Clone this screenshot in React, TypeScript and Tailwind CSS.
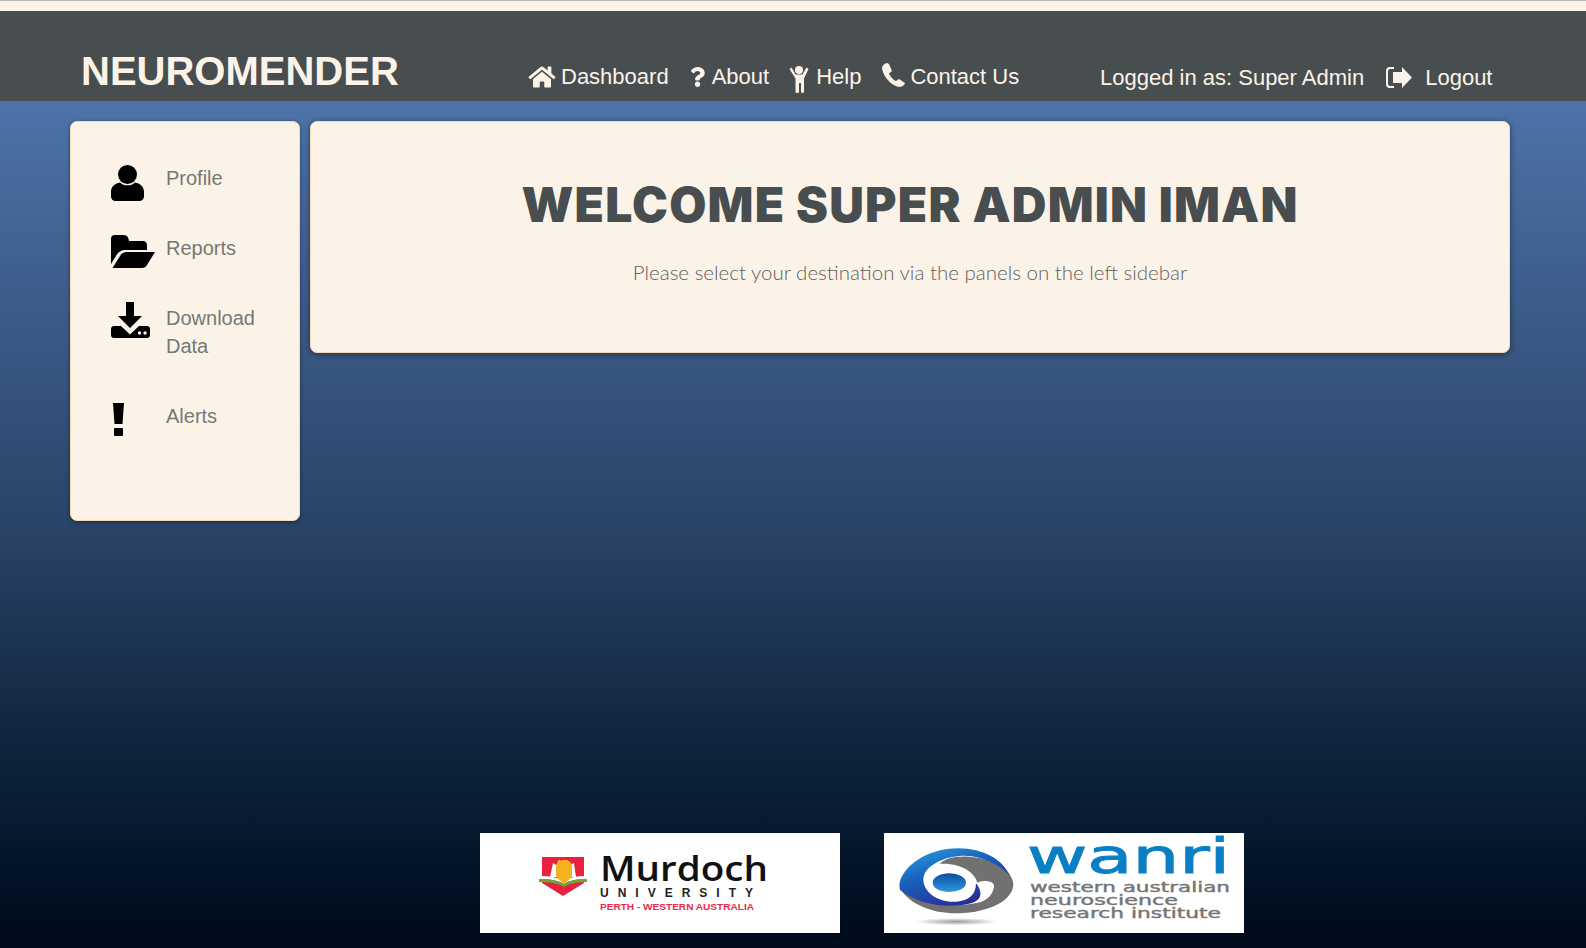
import { FaHome, FaQuestion } from "react-icons/fa";

function HelpIcon() {
  return (
    <svg viewBox="0 0 20 27" className="w-[20px] h-[27px] fill-[#fcf3e8] mt-[5px]">
      <circle cx="10" cy="4" r="4" />
      <path d="M.5 3 2.500 1.500 6.500 8.500h7l4-7L19.500 3 15 12.500V25.500a1.500 1.500 0 0 1-3 0V17h-2v8.500a1.500 1.500 0 0 1-3.500 0V12.500z" />
    </svg>
  );
}

function ContactIcon() {
  return (
    <svg viewBox="0 0 24 24" className="w-[24px] h-[24px] fill-[#fcf3e8] -mt-[3px]">
      <path d="M1 5C1 3 4 0 6 0L8 1l3 7-3 2.500c1 2.500 4 6.500 7 7.500l3-2 6 4-1 2c-2 2-5 2-7 1.500C9 21 2 13 1 5z" />
    </svg>
  );
}

function LogoutIcon() {
  return (
    <svg viewBox="0 0 26 21" className="w-[26px] h-[21px] fill-[#fcf3e8]">
      <path d="M8 0H4a4 4 0 0 0-4 4v13a4 4 0 0 0 4 4h4v-2H4.500A2.500 2.500 0 0 1 2 16.500v-12A2.500 2.500 0 0 1 4.500 2H8z" />
      <path d="M7 5h9V0l10 10.500L16 21v-5H7z" />
    </svg>
  );
}

function UserIcon() {
  return (
    <svg viewBox="0 0 33 36" className="w-[33px] h-[36px]">
      <circle cx="16.500" cy="9.500" r="9.500" />
      <path d="M9 17.500c2 2 4.500 2.800 7.500 2.800s5.500-.8 7.500-2.800c5 .8 9 4 9 9.500v4.500c0 2.500-2 4.500-4.500 4.500h-24C2 36 0 34 0 31.500V27c0-5.500 4-8.700 9-9.500z" />
    </svg>
  );
}

function FolderIcon() {
  return (
    <svg viewBox="0 0 44 33" className="w-[44px] h-[33px]">
      <path d="M0 4a4 4 0 0 1 4-4h9c3 0 4.500 2 5 6h14c2.500 0 4 1.800 4 4v5H15c-5 0-7.500 2-9.500 5L0 29z" />
      <path d="M1.500 33 9 21c2-3 3.500-4 7-4h28l-8 13c-1.200 2-2.500 3-5 3z" />
    </svg>
  );
}

function DownloadIcon() {
  return (
    <svg viewBox="0 0 39 36" className="w-[39px] h-[36px]">
      <path d="M15 0h8v14h8L19 26 7 14h8z" />
      <path d="M3 24h7l9 8.500 9-8.500h8c1.700 0 3 1.300 3 3v6c0 1.700-1.300 3-3 3H3c-1.700 0-3-1.300-3-3v-6c0-1.700 1.300-3 3-3z" />
      <circle cx="28.500" cy="31" r="1.700" fill="#fcf3e8" />
      <circle cx="34" cy="31" r="1.700" fill="#fcf3e8" />
    </svg>
  );
}

function AlertIcon() {
  return (
    <svg viewBox="0 0 11 33" className="w-[11px] h-[33px]">
      <path d="M0 0h11l-1.500 21h-8z" />
      <rect x="1" y="25" width="9" height="8" rx="1" />
    </svg>
  );
}

const navItems = [
  { label: "Dashboard", icon: <FaHome className="w-[28px] h-[24px]" />, gap: "gap-[5px]" },
  { label: "About", icon: <FaQuestion className="w-[17px] h-[20px]" />, gap: "gap-[6px]" },
  { label: "Help", icon: <HelpIcon />, gap: "gap-[7px]" },
  { label: "Contact Us", icon: <ContactIcon />, gap: "gap-[5px]" },
];

const sideItems = [
  { label: ["Profile"], icon: <UserIcon />, top: "pt-px" },
  { label: ["Reports"], icon: <FolderIcon />, top: "pt-px" },
  { label: ["Download", "Data"], icon: <DownloadIcon />, top: "-mt-[2px]" },
  { label: ["Alerts"], icon: <AlertIcon />, top: "pt-px pl-[2px]" },
];

function MurdochLogo() {
  return (
    <svg viewBox="0 0 360 100" className="w-[360px] h-[100px] bg-white block">
      <path d="M62 24h42v26l-21 13-21-13z" fill="#e8213f" />
      <path d="M70 44 73 30l3 2 3-5 4 3 4-3 3 5 4-2 2 14z" fill="#fff" />
      <path d="M59 43c9 0 19 1 25 5 6-4 14-5 23-5v3c-9 0-17 1-23 5-6-4-16-5-25-5z" fill="#fff" />
      <path d="M59 46c9 0 19 1 25 5 6-4 14-5 23-5v3c-9 0-17 1-23 5-6-4-16-5-25-5z" fill="#6fa63a" />
      <path d="M76 33c1-4 4-6 8-6s8 2 8 6v11l-8 7-8-7z" fill="#f6b21b" />
      <text x="120" y="48" fontFamily="'Open Sans', sans-serif" fontWeight="600" fontSize="35" fill="#111" textLength="168" lengthAdjust="spacingAndGlyphs">Murdoch</text>
      <text x="120" y="64" fontFamily="'Liberation Sans', sans-serif" fontWeight="700" fontSize="12" fill="#222" textLength="153">UNIVERSITY</text>
      <text x="120" y="77" fontFamily="'Liberation Sans', sans-serif" fontWeight="700" fontSize="9.500" fill="#e8294a" textLength="154" lengthAdjust="spacingAndGlyphs">PERTH - WESTERN AUSTRALIA</text>
    </svg>
  );
}

function WanriLogo() {
  return (
    <svg viewBox="0 0 360 100" className="w-[360px] h-[100px] bg-white block">
      <defs>
        <linearGradient id="swirl" x1="0" y1="0" x2="0.6" y2="1">
          <stop offset="0" stopColor="#2fa4e6" />
          <stop offset="0.45" stopColor="#1763bd" />
          <stop offset="1" stopColor="#2b2a95" />
        </linearGradient>
        <linearGradient id="ball" x1="0" y1="0" x2="0" y2="1">
          <stop offset="0" stopColor="#0f4c9f" />
          <stop offset="1" stopColor="#2a9be0" />
        </linearGradient>
        <radialGradient id="shade">
          <stop offset="0" stopColor="#9a9a9a" />
          <stop offset="1" stopColor="#ffffff" />
        </radialGradient>
      </defs>
      {/* emblema, trazado a escala 3x */}
      <g transform="translate(6 7) scale(0.3333)">
        <ellipse cx="200" cy="245" rx="125" ry="11" fill="url(#shade)" />
        <path d="M30 145C60 195 130 222 205 220 300 218 372 180 370 130 365 90 320 55 235 50 190 48 160 58 150 72 190 68 250 85 262 128 285 118 315 125 312 140 308 165 290 185 255 190 180 205 90 190 30 145z" fill="#717171" />
        <path d="M28 135C35 80 110 25 205 25 280 25 340 60 358 105 325 70 275 48 225 47 165 47 105 75 100 115 98 160 150 190 200 185 235 182 258 165 258 130 275 150 278 175 255 185 205 205 100 205 30 150z" fill="url(#swirl)" />
        <ellipse cx="178" cy="128" rx="50" ry="28" fill="url(#ball)" />
      </g>
      <text x="143" y="40" fontFamily="'DejaVu Sans', sans-serif" fontWeight="400" fontSize="48" fill="#0a7fc4" stroke="#0a7fc4" strokeWidth="1" textLength="203" lengthAdjust="spacingAndGlyphs">wanri</text>
      <text x="146" y="59" fontFamily="'DejaVu Sans', sans-serif" fontWeight="400" fontSize="14" fill="#757575" stroke="#757575" strokeWidth="0.4" textLength="200" lengthAdjust="spacingAndGlyphs">western australian</text>
      <text x="146" y="72" fontFamily="'DejaVu Sans', sans-serif" fontWeight="400" fontSize="14" fill="#757575" stroke="#757575" strokeWidth="0.4" textLength="148" lengthAdjust="spacingAndGlyphs">neuroscience</text>
      <text x="146" y="85" fontFamily="'DejaVu Sans', sans-serif" fontWeight="400" fontSize="14" fill="#757575" stroke="#757575" strokeWidth="0.4" textLength="191" lengthAdjust="spacingAndGlyphs">research institute</text>
    </svg>
  );
}

export default function App() {
  return (
    <div className="h-[948px] flex flex-col overflow-hidden font-['Liberation_Sans',sans-serif]">
      {/* franja superior */}
      <div className="h-[11px] shrink-0 bg-[#fcf3e8] border-t border-[#b9b7b6]" />

      <header className="h-[90px] shrink-0 bg-[#484d50] text-[#fcf3e8] flex items-end pl-[81px]">
        <div className="text-[40px] font-bold leading-none pb-[10px] w-[447px]">NEUROMENDER</div>
        <nav className="flex items-center gap-[20px] pb-[8px] text-[22px] w-[572px]">
          {navItems.map((n) => (
            <a key={n.label} className={`flex items-center ${n.gap}`}>
              {n.icon}
              <span>{n.label}</span>
            </a>
          ))}
        </nav>
        <div className="flex items-center text-[22px] pb-[7px]">
          <span>Logged in as: Super Admin</span>
          <span className="ml-[22px]"><LogoutIcon /></span>
          <span className="ml-[13px]">Logout</span>
        </div>
      </header>

      <div className="flex-1 flex flex-col bg-gradient-to-b from-[#4d73a9] via-[#2a4468] via-50% to-[#000a1a]">
        <main className="flex-1 flex items-start gap-[10px] pl-[70px] pt-[20px]">
          <aside className="w-[230px] h-[400px] rounded-[7px] bg-[#fcf3e8] border border-[#f6d9b4] shadow-[0_1px_4px_rgba(0,0,0,0.4)] pt-[42px] pl-[40px]">
            <ul className="flex flex-col gap-[42px]">
              {sideItems.map((s) => (
                <li key={s.label[0]} className="flex text-[20px] leading-[28px] text-[#777777]">
                  <div className={`w-[55px] h-[28px] shrink-0 text-black ${s.top}`}>{s.icon}</div>
                  <div>
                    {s.label.map((l) => (
                      <div key={l}>{l}</div>
                    ))}
                  </div>
                </li>
              ))}
            </ul>
          </aside>

          <section className="w-[1200px] h-[232px] rounded-[7px] bg-[#fcf3e8] border border-[#f6d9b4] shadow-[0_1px_6px_rgba(0,0,0,0.45)] flex flex-col items-center pt-[55px]">
            <h1 className="font-['Inter',sans-serif] font-black text-[#484d50] text-[48px] leading-[56px] tracking-[1.2px]">
              WELCOME SUPER ADMIN IMAN
            </h1>
            <p className="font-['Lato',sans-serif] font-light text-[#5f5f5f] text-[20.500px] leading-[28px] mt-[25px]">
              Please select your destination via the panels on the left sidebar
            </p>
          </section>
        </main>

        <footer className="flex gap-[44px] pl-[480px] pb-[15px]">
          <MurdochLogo />
          <WanriLogo />
        </footer>
      </div>
    </div>
  );
}
